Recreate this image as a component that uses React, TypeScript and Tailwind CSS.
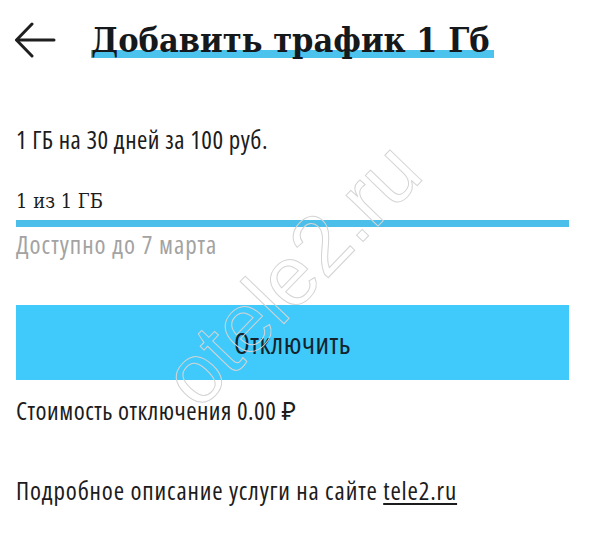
import React from 'react'

const sans = "font-['Open_Sans','Noto_Sans',sans-serif] [font-stretch:condensed]"
const serif = "font-['DejaVu_Serif_Condensed','DejaVu_Serif',serif]"

function BackArrow() {
  return (
    <svg width="42" height="36" viewBox="0 0 42 36" fill="none" stroke="#1f1f1f" strokeWidth="3" strokeLinecap="round" strokeLinejoin="round">
      <path d="M40 18H3" />
      <path d="M18 2L2.5 18L18 34" />
    </svg>
  )
}

export default function App() {
  return (
    <div className="relative w-[590px] h-[556px] overflow-hidden bg-white text-[#1c1c1c]">
      {/* Header */}
      <div className="flex items-center pl-[14px] pt-[20px]">
        <BackArrow />
        <h1 className={`${serif} ml-[35px] relative text-[34px] leading-[40px] font-bold text-[#16191c]`}>
          <span className="absolute left-0 right-[-4px] top-[30px] h-[8px] bg-[#4cc3ec]" />
          <span className="relative">Добавить трафик 1 Гб</span>
        </h1>
      </div>

      <div className="pl-4 pr-[21px]">
        <p className={`${sans} mt-[64px] text-[25px] leading-[30px] tracking-[0.5px]`}>1 ГБ на 30 дней за 100 руб.</p>

        <p className={`${serif} mt-[34px] text-[20px] leading-[26px] font-normal`}>1 из 1 ГБ</p>
        <div className="mt-[6px] h-[7px] bg-[#4bbfe9]" />
        <p className={`${sans} mt-[2px] text-[25px] leading-[30px] tracking-[1px] text-[#a3a3a3]`}>Доступно до 7 марта</p>

        <button className={`${sans} mt-[46px] w-full h-[75px] bg-[#40c9fb] text-[29px] tracking-[0.5px] text-[#14232c]`}>
          Отключить
        </button>

        <p className={`${sans} mt-[15px] text-[25px] leading-[30px] tracking-[0.5px]`}>Стоимость отключения 0.00 ₽</p>

        <p className={`${sans} mt-[50px] text-[25px] leading-[30px] tracking-[0.85px]`}>
          Подробное описание услуги на сайте <span className="underline underline-offset-[3px] decoration-[1.5px]">tele2.ru</span>
        </p>
      </div>

      {/* Watermark */}
      <span className="pointer-events-none absolute left-[128px] top-[232px] -rotate-[46deg] font-['Liberation_Sans',sans-serif] text-[84px] leading-none text-transparent [-webkit-text-stroke:1px_#d4d4d4]">
        otele2.ru
      </span>
    </div>
  )
}
